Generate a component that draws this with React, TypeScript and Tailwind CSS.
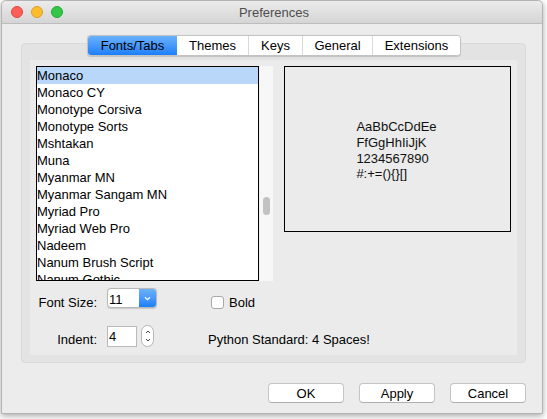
import { ReactNode } from "react";

const fonts = [
  "Monaco",
  "Monaco CY",
  "Monotype Corsiva",
  "Monotype Sorts",
  "Mshtakan",
  "Muna",
  "Myanmar MN",
  "Myanmar Sangam MN",
  "Myriad Pro",
  "Myriad Web Pro",
  "Nadeem",
  "Nanum Brush Script",
  "Nanum Gothic",
];

const tabs = [
  { label: "Fonts/Tabs", w: "w-[89px]", active: true },
  { label: "Themes", w: "w-[71px]" },
  { label: "Keys", w: "w-[54px]" },
  { label: "General", w: "w-[70px]" },
  { label: "Extensions", w: "w-[88px]" },
];

export default function App() {
  return (
    <div className="w-[547px] h-[419px] bg-white pl-[1px] font-['Liberation_Sans',Arial,sans-serif] text-[13px] text-black">
      <div className="w-[542px] h-[414px] bg-[#ececec] border border-[#b4b4b4] rounded-t-[5px] shadow-[0_2px_6px_rgba(0,0,0,0.35)] flex flex-col">
        {/* Title bar */}
        <div className="h-[23px] rounded-t-[5px] bg-gradient-to-b from-[#ebebeb] to-[#d5d5d5] border-b border-[#bdbdbd] grid grid-cols-[1fr_auto_1fr] items-center">
          <div className="flex gap-[8px] pl-[9px]">
            <Light className="bg-[#fc5f57] border-[#de4841]" />
            <Light className="bg-[#fdbc2e] border-[#dd9f28]" />
            <Light className="bg-[#33c748] border-[#27a838]" />
          </div>
          <div className="text-[#4d4d4d] pl-[4px] leading-[15px]">Preferences</div>
          <div />
        </div>

        {/* Body */}
        <div className="flex-1 pt-[11px] pl-[19px] pr-[16px] flex flex-col">
          {/* Tabs */}
          <div className="relative z-10 h-[21px] flex justify-center pl-[1px]">
            <div className="flex h-[21px] bg-white border border-[#c3c3c3] rounded-[4px] shadow-[0_0.5px_1px_rgba(0,0,0,0.15)] overflow-hidden">
              {tabs.map((t, i) => (
                <div
                  key={t.label}
                  className={
                    (t.active
                      ? "bg-gradient-to-b from-[#6ab1fb] to-[#1a7ffa] "
                      : "bg-white ") +
                    (i > 1 ? "border-l border-[#d9d9d9] " : "") +
                    t.w +
                    " h-full flex items-center justify-center leading-[15px]"
                  }
                >
                  {t.label}
                </div>
              ))}
            </div>
          </div>

          {/* Tab box */}
          <div className="-mt-[13px] w-[505px] h-[320px] bg-[#e3e3e3] rounded-[4px] border border-[#dadada] pt-[16px] pl-[8px] pr-[8px] pb-[7px]">
            <div className="w-full h-full bg-[#ebebeb] p-[6px] flex flex-col">
              <div className="flex">
                {/* Font list */}
                <div className="w-[223px] h-[215px] bg-white border border-black overflow-hidden">
                  {fonts.map((f, i) => (
                    <div
                      key={f}
                      className={
                        (i === 0 ? "bg-[#b9d7f9] " : "") +
                        "h-[17px] leading-[17px] whitespace-nowrap"
                      }
                    >
                      {f}
                    </div>
                  ))}
                </div>
                {/* Scrollbar */}
                <div className="w-[14px] h-[215px] bg-[#f7f7f7] border-l border-[#efefef] pt-[131px] flex justify-center">
                  <div className="w-[7px] h-[18px] rounded-full bg-[#c2c2c2]" />
                </div>
                {/* Preview */}
                <div className="ml-[11px] w-[227px] h-[166px] border border-black flex items-center justify-center pt-[3px] pr-[2px]">
                  <div className="leading-[15.6px] text-[#111]">
                    <div>AaBbCcDdEe</div>
                    <div>FfGgHhIiJjK</div>
                    <div>1234567890</div>
                    <div>#:+=(){"{"}{"}"}[]</div>
                  </div>
                </div>
              </div>

              {/* Font size row */}
              <div className="mt-[7px] h-[22px] flex items-start">
                <Label>Font Size:</Label>
                <div className="ml-[10px] w-[50px] h-[20px] flex bg-white border border-[#b8b8b8] rounded-[4px] overflow-hidden shadow-[0_0.5px_1px_rgba(0,0,0,0.15)]">
                  <div className="flex-1 pl-[1px] pt-[3px] leading-[15px]">11</div>
                  <div className="w-[17px] h-full bg-gradient-to-b from-[#6cb2fb] to-[#1b7ffa] flex items-center justify-center">
                    <svg width="7" height="5" viewBox="0 0 7 5">
                      <path d="M1 1.2 L3.5 3.6 L6 1.2" fill="none" stroke="white" strokeWidth="1.3" />
                    </svg>
                  </div>
                </div>
                <div className="ml-[54px] mt-[8px] w-[13px] h-[13px] bg-white border border-[#a9a9a9] rounded-[3px]" />
                <div className="ml-[5px] mt-[7px] leading-[15px]">Bold</div>
              </div>

              {/* Indent row */}
              <div className="mt-[15px] h-[22px] flex items-start">
                <Label>Indent:</Label>
                <div className="ml-[10px] mt-[1px] w-[30px] h-[21px] bg-white border border-[#b9b9b9] pl-[1px] pt-[2px] leading-[15px]">
                  4
                </div>
                <div className="ml-[4px] w-[13px] h-[22px] bg-white border border-[#b4b4b4] rounded-full flex flex-col items-center justify-center gap-[4px]">
                  <svg width="6" height="4" viewBox="0 0 6 4">
                    <path d="M1 3 L3 1 L5 3" fill="none" stroke="#444" strokeWidth="1" />
                  </svg>
                  <svg width="6" height="4" viewBox="0 0 6 4">
                    <path d="M1 1 L3 3 L5 1" fill="none" stroke="#444" strokeWidth="1" />
                  </svg>
                </div>
                <div className="ml-[54px] mt-[7px] leading-[15px]">Python Standard: 4 Spaces!</div>
              </div>
            </div>
          </div>

          {/* Buttons */}
          <div className="mt-[20px] w-[505px] flex justify-end gap-[15px]">
            <Button>OK</Button>
            <Button>Apply</Button>
            <Button>Cancel</Button>
          </div>
        </div>
      </div>
    </div>
  );
}

function Light({ className }: { className: string }) {
  return <div className={"w-[12px] h-[12px] rounded-full border " + className} />;
}

function Label({ children }: { children: ReactNode }) {
  return <div className="w-[61px] mt-[7px] text-right leading-[15px] whitespace-nowrap">{children}</div>;
}

function Button({ children }: { children: ReactNode }) {
  return (
    <div className="w-[76px] h-[20px] bg-white border border-[#c4c4c4] border-b-[#aeaeae] rounded-[4px] flex items-center justify-center leading-[15px]">
      {children}
    </div>
  );
}
